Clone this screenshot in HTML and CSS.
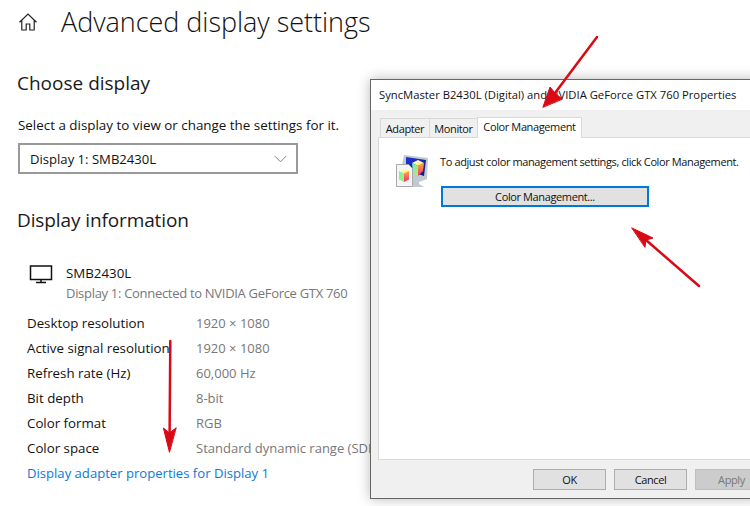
FILE: index.html
```html
<!DOCTYPE html>
<html lang="en">
<head>
<meta charset="utf-8">
<title>Advanced display settings</title>
<link rel="stylesheet" href="styles.css">
</head>
<body>
<main class="settings">
  <header class="page-head">
    <svg class="home" viewBox="0 0 20 20" width="20" height="20" aria-hidden="true">
      <path d="M1.5 10.2 10 2l8.5 8.2M3.8 8.4V18h4.400v-6h3.600v6h4.400V8.400" fill="none" stroke="#222" stroke-width="1.200"/>
    </svg>
    <h1>Advanced display settings</h1>
  </header>
  <h2 class="choose">Choose display</h2>
  <p class="hint">Select a display to view or change the settings for it.</p>
  <div class="select">
    <span>Display 1: SMB2430L</span>
    <svg viewBox="0 0 14 8" width="13" height="8" aria-hidden="true"><path d="M.7.7 7 7l6.300-6.300" fill="none" stroke="#777" stroke-width="1"/></svg>
  </div>
  <h2 class="info">Display information</h2>
  <div class="monitor">
    <svg viewBox="0 0 24 20" width="24" height="20" aria-hidden="true">
      <path d="M1.500 2h21v13.500h-21zM12 15.500v2.800M7 18.500h10" fill="none" stroke="#111" stroke-width="1.500"/>
    </svg>
    <div>
      <div class="mon-name">SMB2430L</div>
      <div class="mon-sub">Display 1: Connected to NVIDIA GeForce GTX 760</div>
    </div>
  </div>
  <dl class="props">
    <dt>Desktop resolution</dt><dd>1920 × 1080</dd>
    <dt>Active signal resolution</dt><dd>1920 × 1080</dd>
    <dt>Refresh rate (Hz)</dt><dd>60,000 Hz</dd>
    <dt>Bit depth</dt><dd>8-bit</dd>
    <dt>Color format</dt><dd>RGB</dd>
    <dt>Color space</dt><dd>Standard dynamic range (SDR)</dd>
  </dl>
  <a class="link" href="#">Display adapter properties for Display 1</a>
</main>

<section class="dialog">
  <div class="dlg-title">SyncMaster B2430L (Digital) and NVIDIA GeForce GTX 760 Properties</div>
  <div class="dlg-body">
    <div class="tabs">
      <span class="tab tab-a">Adapter</span>
      <span class="tab tab-m">Monitor</span>
      <span class="tab active">Color Management</span>
    </div>
    <div class="panel">
      <svg class="cm-icon" viewBox="0 0 32 32" width="32" height="32" aria-hidden="true">
        <defs>
          <linearGradient id="scr" x1="0" y1="0" x2="1" y2="1"><stop offset="0" stop-color="#1c35e0"/><stop offset="1" stop-color="#101c6e"/></linearGradient>
          <linearGradient id="top" x1="0" y1="0" x2="1" y2="1"><stop offset="0" stop-color="#fff"/><stop offset="1" stop-color="#ffe84a"/></linearGradient>
          <linearGradient id="lft" x1="0" y1="0" x2="1" y2="1"><stop offset="0" stop-color="#6cf0e0"/><stop offset="1" stop-color="#b8f040"/></linearGradient>
          <linearGradient id="rgt" x1="0" y1="0" x2="0" y2="1"><stop offset="0" stop-color="#ffb020"/><stop offset="1" stop-color="#f02890"/></linearGradient>
        </defs>
        <path d="M8 0l24 3-1 21-8 3v2l5 3H17l-14-6z" fill="#c2c9d0"/>
        <path d="M10 2l20 3-2 16-18-6z" fill="url(#scr)"/>
        <path d="M16 8l6-3 6 3-6 3z" fill="url(#top)"/>
        <path d="M16 8l6 3v10l-5-3z" fill="url(#lft)"/>
        <path d="M22 11l6-3-1 8-5 5z" fill="url(#rgt)"/>
        <path d="M.5 9.500h12l4 4v18H.5z" fill="#f5f5f5" stroke="#a8a8a8"/>
        <path d="M3 16l5-2.500 5 2.500-5 2.500z" fill="url(#top)"/>
        <path d="M3 16l5 2.500V27l-5-2.500z" fill="url(#lft)"/>
        <path d="M8 18.500l5-2.500v8.500L8 27z" fill="url(#rgt)"/>
      </svg>
      <div class="panel-main">
        <p>To adjust color management settings, click Color Management.</p>
        <button class="btn-cm" type="button">Color Management...</button>
      </div>
    </div>
    <div class="actions">
      <button type="button">OK</button>
      <button type="button">Cancel</button>
      <button type="button" class="off">Apply</button>
    </div>
  </div>
</section>

<svg class="arrows" viewBox="0 0 750 506" width="750" height="506" aria-hidden="true">
  <g fill="#d90a16" stroke="#d90a16" stroke-linecap="round" stroke-linejoin="round">
    <path d="M597 37 555 93" stroke-width="2.500" fill="none"/>
    <path d="M543 107l7-20 5 6 7 6z" stroke-width="1"/>
    <path d="M699 286 646 240" stroke-width="2.500" fill="none"/>
    <path d="M632 228l21 10-7 2-1 7z" stroke-width="1"/>
    <path d="M170.300 341 169.600 434" stroke-width="2.500" fill="none"/>
    <path d="M169.400 452l-6-24 6 5 6.500-5z" stroke-width="1"/>
  </g>
</svg>
</body>
</html>
```

FILE: styles.css
```css
html, body { margin: 0; padding: 0; }
body {
  width: 750px;
  height: 506px;
  overflow: hidden;
  background: #fff;
  position: relative;
  font-family: "Open Sans", "Noto Sans", sans-serif;
  color: #111;
}
.settings { padding: 0 0 0 17px; }
.page-head { display: flex; align-items: center; height: 43px; }
.home { margin-left: 1px; }
h1 {
  margin: 0 0 0 23px;
  font-size: 27px;
  font-weight: 300;
  line-height: 43px;
  white-space: nowrap;
  letter-spacing: -.04px;
}
h2 {
  margin: 0;
  font-weight: 400;
  font-size: 19px;
  line-height: 28px;
  color: #1a1a1a;
}
.choose { margin-top: 26px; }
.hint { margin: 18px 0 0 1px; font-size: 13.4px; line-height: 20px; }
.select {
  box-sizing: border-box;
  width: 280px;
  height: 31px;
  margin: 8px 0 0 1px;
  padding: 0 9px 0 10px;
  border: 2px solid #999;
  display: flex;
  align-items: center;
  justify-content: space-between;
  font-size: 13.100px;
}
.info { margin-top: 32px; letter-spacing: -.11px; }
.monitor { display: flex; margin: 29px 0 0 12px; }
.monitor svg { margin-top: 1px; margin-right: 13px; flex: none; }
.mon-name { font-size: 13.300px; line-height: 20px; }
.mon-sub { font-size: 13px; line-height: 20px; color: #777; white-space: nowrap; letter-spacing: -.3px; }
.props {
  display: grid;
  grid-template-columns: 169px 1fr;
  grid-auto-rows: 25px;
  align-items: center;
  margin: 7px 0 0 10px;
  font-size: 13.300px;
}
.props dt { white-space: nowrap; }
.props dd { margin: 0; color: #777; white-space: nowrap; font-size: 13px; }
.link {
  display: block;
  margin: 1px 0 0 10px;
  font-size: 13.100px;
  line-height: 25px;
  color: #0a78d7;
  text-decoration: none;
}
.dialog {
  position: absolute;
  left: 370px;
  top: 79px;
  width: 390px;
  height: 420px;
  box-sizing: border-box;
  border: 1px solid #666;
  background: #f0f0f0;
  box-shadow: 0 0 12px rgba(0, 0, 0, .28);
  font-size: 11px;
  display: flex;
  flex-direction: column;
  color: #111;
}
.dlg-title {
  background: #fff;
  height: 30px;
  line-height: 30px;
  padding-left: 8px;
  white-space: nowrap;
  font-size: 11.250px;
}
.dlg-body { flex: 1; display: flex; flex-direction: column; padding: 0 0 0 7px; letter-spacing: -.38px; }
.tabs { display: flex; align-items: flex-end; height: 27px; padding-left: 2px; }
.tab {
  box-sizing: border-box;
  height: 19px;
  line-height: 19px;
  text-align: center;
  border: 1px solid #d9d9d9;
  border-bottom: 0;
  margin-right: -1px;
}
.tab-a { width: 50px; }
.tab-m { width: 49px; }
.tab.active {
  width: 105px;
  height: 21px;
  line-height: 18px;
  background: #fff;
  position: relative;
  top: 1px;
}
.panel {
  box-sizing: border-box;
  height: 323px;
  background: #fff;
  border: 1px solid #d9d9d9;
  border-right: 0;
  display: flex;
  padding: 17px 0 0 17px;
}
.cm-icon { flex: none; margin-right: 12px; }
.panel p { margin: -1px 0 0; line-height: 16px; white-space: nowrap; }
.btn-cm {
  display: block;
  box-sizing: border-box;
  width: 208px;
  height: 21px;
  margin: 16px 0 0 1px;
  border: 2px solid #0078d7;
  background: #e1e1e1;
  font: inherit;
  letter-spacing: inherit;
  padding: 0;
  color: #111;
}
.actions { display: flex; gap: 8px; padding: 9px 0 0 155px; }
.actions button {
  box-sizing: border-box;
  width: 73px;
  height: 21px;
  border: 1px solid #adadad;
  background: #e1e1e1;
  font: inherit;
  letter-spacing: inherit;
  padding: 0;
  color: #111;
  flex: none;
}
.actions .off { background: #ccc; border-color: #bfbfbf; color: #787878; }
.arrows { position: absolute; left: 0; top: 0; pointer-events: none; }
```
